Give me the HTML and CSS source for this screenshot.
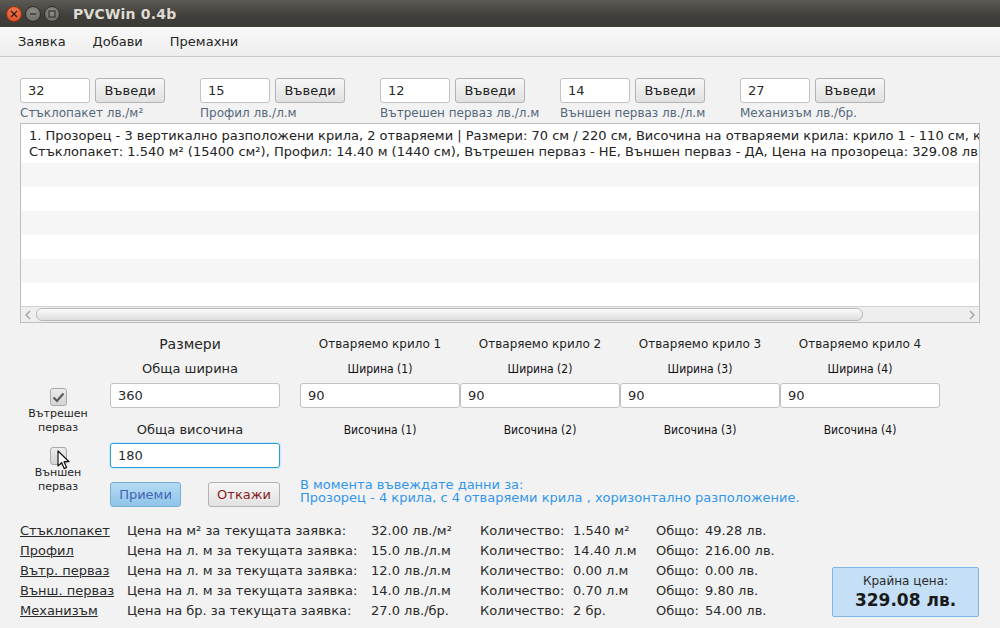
FILE: index.html
```html
<!DOCTYPE html>
<html lang="bg">
<head>
<meta charset="utf-8">
<title>PVCWin 0.4b</title>
<link rel="stylesheet" href="styles.css">
</head>
<body>
<div class="window">
  <div class="titlebar">
    <div class="wbtns">
      <span class="wbtn close"><svg width="8" height="8" viewBox="0 0 8 8"><path d="M1 1L7 7M7 1L1 7" stroke="#3a1a10" stroke-width="1.4"/></svg></span>
      <span class="wbtn"><svg width="8" height="8" viewBox="0 0 8 8"><path d="M1 4H7" stroke="#3c3b37" stroke-width="1.6"/></svg></span>
      <span class="wbtn"><svg width="8" height="8" viewBox="0 0 8 8"><rect x="1" y="1" width="6" height="6" fill="none" stroke="#3c3b37" stroke-width="1.3"/></svg></span>
    </div>
    <span class="title">PVCWin 0.4b</span>
  </div>
  <div class="menubar">
    <span class="menu">Заявка</span>
    <span class="menu">Добави</span>
    <span class="menu">Премахни</span>
  </div>

  <div class="prices">
    <div class="pgroup">
      <div class="prow"><div class="field small">32</div><div class="btn">Въведи</div></div>
      <div class="caption">Стъклопакет лв./м²</div>
    </div>
    <div class="pgroup">
      <div class="prow"><div class="field small">15</div><div class="btn">Въведи</div></div>
      <div class="caption">Профил лв./л.м</div>
    </div>
    <div class="pgroup">
      <div class="prow"><div class="field small">12</div><div class="btn">Въведи</div></div>
      <div class="caption">Вътрешен перваз лв./л.м</div>
    </div>
    <div class="pgroup">
      <div class="prow"><div class="field small">14</div><div class="btn">Въведи</div></div>
      <div class="caption">Външен перваз лв./л.м</div>
    </div>
    <div class="pgroup">
      <div class="prow"><div class="field small">27</div><div class="btn">Въведи</div></div>
      <div class="caption">Механизъм лв./бр.</div>
    </div>
  </div>

  <div class="list">
    <div class="rows">
      <div class="row first">
        <div class="line">1. Прозорец - 3 вертикално разположени крила, 2 отваряеми | Размери: 70 см / 220 см, Височина на отваряеми крила: крило 1 - 110 см, крило 2 - 110 см</div>
        <div class="line">Стъклопакет: 1.540 м² (15400 см²), Профил: 14.40 м (1440 см), Вътрешен перваз - НЕ, Външен перваз - ДА, Цена на прозореца: 329.08 лв.</div>
      </div>
      <div class="row alt"></div>
      <div class="row"></div>
      <div class="row alt"></div>
      <div class="row"></div>
      <div class="row alt"></div>
      <div class="row"></div>
    </div>
    <div class="hscroll">
      <svg class="arrow" width="8" height="10" viewBox="0 0 8 10"><path d="M6 1L2 5L6 9" fill="none" stroke="#9a9a9a" stroke-width="1.2"/></svg>
      <div class="track"><div class="thumb"></div></div>
      <svg class="arrow" width="8" height="10" viewBox="0 0 8 10"><path d="M2 1L6 5L2 9" fill="none" stroke="#9a9a9a" stroke-width="1.2"/></svg>
    </div>
  </div>

  <div class="dims">
    <div class="c2 r1 sect">Размери</div>
    <div class="c3 r1 head">Отваряемо крило 1</div>
    <div class="c4 r1 head">Отваряемо крило 2</div>
    <div class="c5 r1 head">Отваряемо крило 3</div>
    <div class="c6 r1 head">Отваряемо крило 4</div>

    <div class="c2 r2 lbl">Обща ширина</div>
    <div class="c3 r2 sub">Ширина (1)</div>
    <div class="c4 r2 sub">Ширина (2)</div>
    <div class="c5 r2 sub">Ширина (3)</div>
    <div class="c6 r2 sub">Ширина (4)</div>

    <div class="c1 r34 cbox">
      <span class="check on"><svg width="13" height="11" viewBox="0 0 13 11"><path d="M1.5 5.5L5 9L11.5 1.5" fill="none" stroke="#5a5a5a" stroke-width="2.2"/></svg></span>
      <span class="cblabel">Вътрешен<br>перваз</span>
    </div>
    <div class="c2 r3"><div class="field wide">360</div></div>
    <div class="c3 r3"><div class="field wing">90</div></div>
    <div class="c4 r3"><div class="field wing">90</div></div>
    <div class="c5 r3"><div class="field wing">90</div></div>
    <div class="c6 r3"><div class="field wing">90</div></div>

    <div class="c2 r4 lbl">Обща височина</div>
    <div class="c3 r4 sub">Височина (1)</div>
    <div class="c4 r4 sub">Височина (2)</div>
    <div class="c5 r4 sub">Височина (3)</div>
    <div class="c6 r4 sub">Височина (4)</div>

    <div class="c1 r56 cbox second">
      <span class="check"></span>
      <span class="cblabel">Външен<br>перваз</span>
      <svg class="cursor" width="14" height="20" viewBox="0 0 14 20"><path d="M1 1V16L4.6 12.6L7.2 18.6L9.6 17.5L7 11.7H12Z" fill="#fff" stroke="#111" stroke-width="1.2" stroke-linejoin="round"/></svg>
    </div>
    <div class="c2 r5"><div class="field wide focus">180</div></div>

    <div class="c2 r6 actions">
      <div class="btn primary">Приеми</div>
      <div class="btn cancel">Откажи</div>
    </div>
    <div class="c36 r6 info">В момента въвеждате данни за:<br>Прозорец - 4 крила, с 4 отваряеми крила , хоризонтално разположение.</div>
  </div>

  <div class="bottom">
    <div class="table">
      <span class="link">Стъклопакет</span><span>Цена на м² за текущата заявка:</span><span>32.00 лв./м²</span><span>Количество:</span><span>1.540 м²</span><span>Общо:</span><span>49.28 лв.</span>
      <span class="link">Профил</span><span>Цена на л. м за текущата заявка:</span><span>15.0 лв./л.м</span><span>Количество:</span><span>14.40 л.м</span><span>Общо:</span><span>216.00 лв.</span>
      <span class="link">Вътр. перваз</span><span>Цена на л. м за текущата заявка:</span><span>12.0 лв./л.м</span><span>Количество:</span><span>0.00 л.м</span><span>Общо:</span><span>0.00 лв.</span>
      <span class="link">Външ. перваз</span><span>Цена на л. м за текущата заявка:</span><span>14.0 лв./л.м</span><span>Количество:</span><span>0.70 л.м</span><span>Общо:</span><span>9.80 лв.</span>
      <span class="link">Механизъм</span><span>Цена на бр. за текущата заявка:</span><span>27.0 лв./бр.</span><span>Количество:</span><span>2 бр.</span><span>Общо:</span><span>54.00 лв.</span>
    </div>
    <div class="total">
      <div class="tlabel">Крайна цена:</div>
      <div class="tvalue">329.08 лв.</div>
    </div>
  </div>
</div>
</body>
</html>
```
FILE: styles.css
```css
* { box-sizing: border-box; }
html, body { margin: 0; padding: 0; }
body {
  width: 1000px;
  height: 628px;
  overflow: hidden;
  background: #f2f2f2;
  font-family: "DejaVu Sans", "Liberation Sans", sans-serif;
  font-size: 13px;
  color: #333;
}
.window { width: 1000px; height: 628px; }

/* title bar */
.titlebar {
  height: 27px;
  background: linear-gradient(#5b5a55, #3f3e3a 60%, #3c3b37);
  display: flex;
  align-items: center;
  padding-left: 6px;
}
.wbtns { display: flex; gap: 3px; }
.wbtn {
  width: 16px; height: 16px; border-radius: 50%;
  background: radial-gradient(circle at 50% 35%, #8e8d88, #64635e);
  border: 1px solid #2f2e2b;
  display: flex; align-items: center; justify-content: center;
}
.wbtn.close { background: radial-gradient(circle at 50% 35%, #f27c55, #dc4a1c); border-color: #9a3410; }
.title {
  margin-left: 13px;
  color: #dfdbd2;
  font-weight: bold;
  font-size: 14px;
  letter-spacing: 0.2px;
}

/* menu */
.menubar {
  height: 30px;
  background: linear-gradient(#f8f8f8, #eeeeee);
  border-bottom: 1px solid #c8c8c8;
  display: flex;
  align-items: center;
  padding-left: 18px;
  gap: 27px;
}
.menu { color: #262626; font-size: 13px; }

/* price inputs */
.prices {
  display: flex;
  gap: 35px;
  padding: 21px 0 0 20px;
}
.pgroup { width: 145px; display: flex; flex-direction: column; }
.prow { display: flex; gap: 5px; height: 25px; }
.caption {
  margin-top: 3px;
  line-height: 15px;
  font-size: 12px;
  color: #56687a;
  white-space: nowrap;
}
.field {
  height: 25px;
  background: #fff;
  border: 1px solid #c2c2c2;
  border-radius: 3px;
  padding-left: 7px;
  line-height: 23px;
  color: #2a2a2a;
  font-size: 13px;
}
.field.small { width: 70px; }
.field.wide { width: 170px; }
.field.wing { width: 160px; }
.field.focus {
  border: 1px solid #2a9fd6;
  box-shadow: 0 0 0 1px #cde9f7;
}
.btn {
  height: 25px;
  width: 70px;
  border: 1px solid #b3b3b3;
  border-radius: 3px;
  background: linear-gradient(#f6f6f6, #e1e1e1);
  text-align: center;
  line-height: 23px;
  color: #222;
  font-size: 13px;
}

/* list */
.list {
  margin: 2px 0 0 20px;
  width: 960px;
  height: 200px;
  border: 1px solid #bdbdbd;
  background: #fff;
  display: flex;
  flex-direction: column;
  overflow: hidden;
}
.rows { height: 182px; overflow: hidden; }
.row { height: 24px; background: #fff; }
.row.alt { background: #f6f6f6; }
.row.first { height: 39px; padding: 4px 0 0 8px; }
.line {
  white-space: nowrap;
  overflow: hidden;
  line-height: 16px;
  color: #222;
}
.hscroll {
  height: 16px;
  border-top: 1px solid #d2d2d2;
  background: #eeeeee;
  display: flex;
  align-items: center;
  padding: 0 3px;
  gap: 4px;
}
.arrow { flex: none; }
.track { flex: 1; height: 13px; padding-right: 101px; }
.thumb {
  height: 13px;
  border: 1px solid #b9b9b9;
  border-radius: 6px;
  background: linear-gradient(#fafafa, #dedede);
}

/* dimensions */
.dims {
  display: grid;
  margin: 8px 0 0 20px;
  grid-template-columns: 90px 190px 160px 160px 160px 160px;
  grid-template-rows: 26px 26px 35px 25px 39px 25px;
}
.c1 { grid-column: 1; }
.c2 { grid-column: 2; }
.c3 { grid-column: 3; }
.c4 { grid-column: 4; }
.c5 { grid-column: 5; }
.c6 { grid-column: 6; }
.c36 { grid-column: 3 / 7; }
.r1 { grid-row: 1; }
.r2 { grid-row: 2; }
.r3 { grid-row: 3; }
.r4 { grid-row: 4; }
.r5 { grid-row: 5; }
.r6 { grid-row: 6; }
.r34 { grid-row: 3 / 5; }
.r56 { grid-row: 5 / 7; }

.sect { width: 160px; text-align: center; line-height: 26px; font-size: 14px; color: #262626; }
.head { text-align: center; line-height: 26px; font-size: 12px; color: #1e1e1e; }
.lbl { width: 160px; text-align: center; line-height: 24px; font-size: 13px; color: #262626; }
.sub {
  text-align: center;
  line-height: 24px;
  font-size: 12px;
  font-family: "DejaVu Sans Condensed", "DejaVu Sans", sans-serif;
  font-stretch: condensed;
  color: #111;
}
.cbox {
  width: 76px;
  display: flex;
  flex-direction: column;
  align-items: center;
  padding-top: 5px;
  position: relative;
}
.cbox.second { padding-top: 4px; }
.check {
  width: 17px; height: 18px;
  border: 1px solid #a9a9a9;
  border-radius: 3px;
  background: linear-gradient(#ececec, #d4d4d4);
  display: flex; align-items: center; justify-content: center;
}
.cblabel {
  margin-top: 1px;
  text-align: center;
  font-size: 11px;
  line-height: 14px;
  color: #1e1e1e;
}
.cursor { position: absolute; left: 37px; top: 7px; }

.actions { width: 170px; display: flex; justify-content: space-between; }
.btn.primary {
  width: 71px;
  background: linear-gradient(#b4dbf3, #8fc4e8);
  border-color: #76afd6;
  color: #4466b4;
}
.btn.cancel { width: 72px; color: #8a1c1c; }
.info {
  margin-top: -4px;
  font-size: 13px;
  line-height: 13px;
  color: #3196ea;
}

/* bottom */
.bottom {
  display: flex;
  align-items: flex-end;
  padding: 14px 21px 0 20px;
}
.table {
  display: grid;
  grid-template-columns: 107px 244px 109px 93px 83px 49px auto;
  grid-auto-rows: 20px;
  line-height: 20px;
  font-size: 13px;
  color: #2a2a2a;
  white-space: nowrap;
}
.link { text-decoration: underline; }
.total {
  margin-left: auto;
  margin-bottom: 4px;
  width: 147px;
  height: 50px;
  background: #c4dff6;
  border: 1px solid #7fb6e4;
  border-radius: 2px;
  text-align: center;
  padding-top: 5px;
}
.tlabel { font-size: 12px; line-height: 16px; color: #2a2a2a; }
.tvalue { font-size: 17px; line-height: 22px; font-weight: bold; color: #1a1a1a; }
```
